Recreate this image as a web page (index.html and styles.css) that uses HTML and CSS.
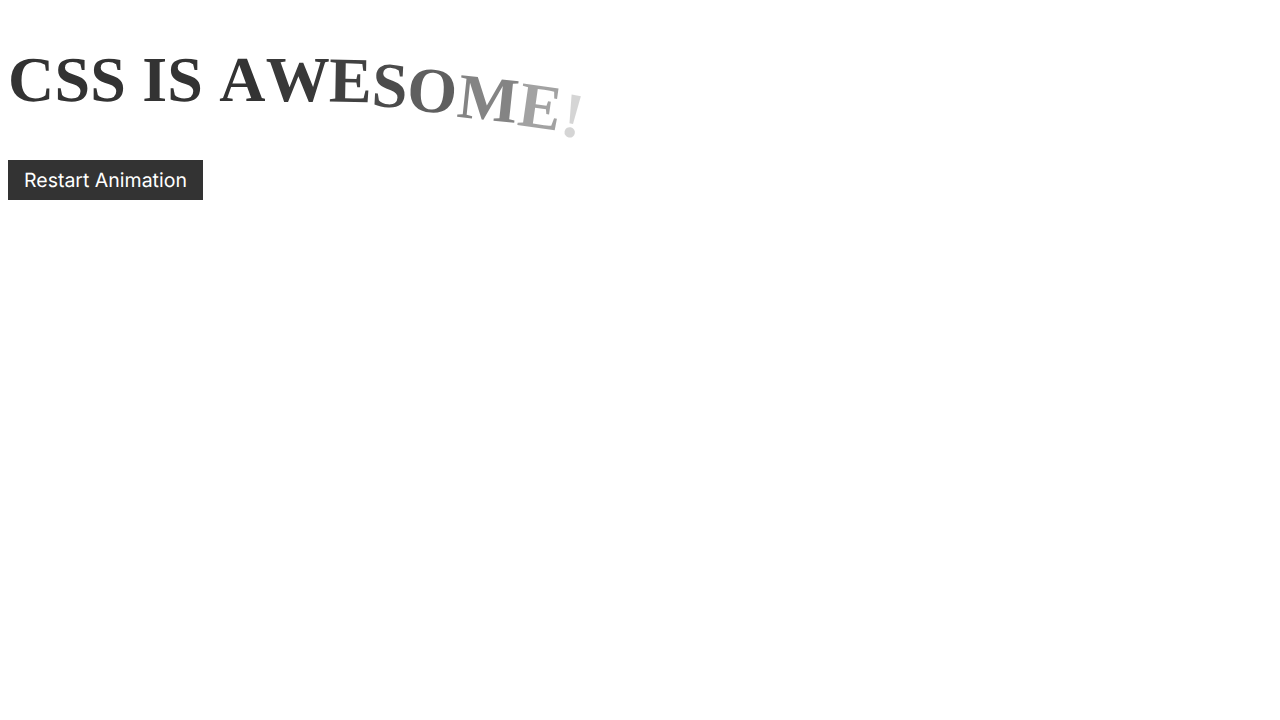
FILE: index.html
```html
<!DOCTYPE html>
<html lang="en">

<head>
    <meta charset="UTF-8">
    <title>CSS is Awesome</title>
    <link rel="stylesheet" href="styles.css">
</head>

<body>
    <h1 class="title"><span class="letter">C</span><span class="letter">S</span><span class="letter">S</span><span class="letter"> </span><span class="letter">I</span><span class="letter">S</span><span class="letter"> </span><span class="letter">A</span><span class="letter l0">W</span><span class="letter l1">E</span><span class="letter l2">S</span><span class="letter l3">O</span><span class="letter l4">M</span><span class="letter l5">E</span><span class="letter l6">!</span></h1>
    <button class="restart">Restart Animation</button>
</body>

</html>
```

FILE: styles.css
```css
body {
    margin: 8px;
    background-color: #fff;
}

.title {
    margin: 32px 0 40px;
    font-family: "Liberation Serif", serif;
    font-size: 64px;
    font-weight: bold;
    line-height: 80px;
    letter-spacing: 0.2px;
    color: #333;
    text-rendering: geometricPrecision;
    white-space: pre;
}

.letter {
    display: inline-block;
}

/* letters falling away at the end of the animation */
.l0 { opacity: 0.97; }
.l1 { transform: translate(-1px, 1px) rotate(1deg); opacity: 0.93; }
.l2 { transform: translate(-1px, 6px) rotate(3deg); opacity: 0.88; }
.l3 { transform: translate(-1.5px, 11px) rotate(4deg); opacity: 0.78; }
.l4 { transform: translate(-1px, 19px) rotate(6deg); opacity: 0.6; }
.l5 { transform: translateY(27px) rotate(8deg); opacity: 0.45; }
.l6 { transform: translateY(36px) rotate(10deg); opacity: 0.2; }

.restart {
    display: block;
    height: 40px;
    padding: 0 16px;
    border: none;
    background-color: #333;
    color: #fff;
    font-family: Inter, sans-serif;
    font-size: 19.5px;
    text-rendering: geometricPrecision;
    cursor: pointer;
}
```
